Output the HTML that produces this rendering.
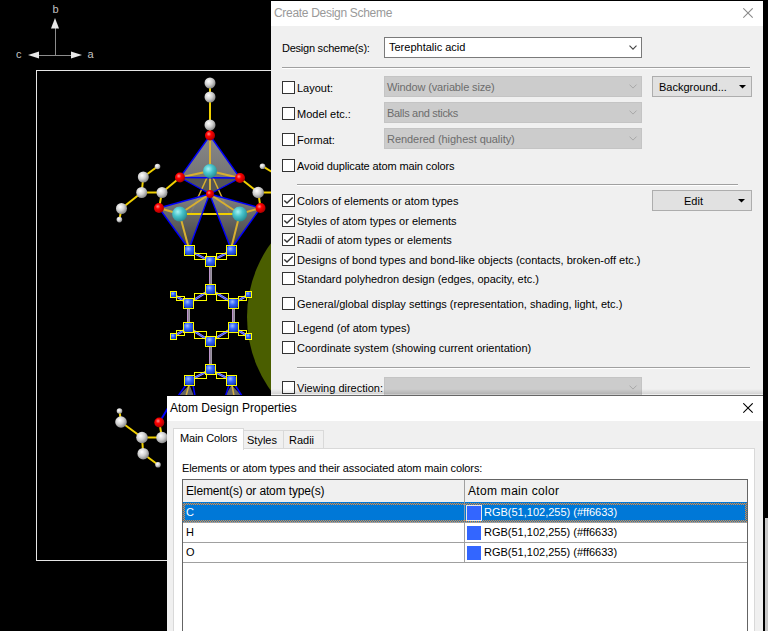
<!DOCTYPE html>
<html><head><meta charset="utf-8">
<style>
html,body{margin:0;padding:0;}
body{width:768px;height:631px;overflow:hidden;background:#000;position:relative;font-family:"Liberation Sans",sans-serif;}
.a{position:absolute;}
.t{position:absolute;font-size:11px;line-height:13px;white-space:pre;color:#000;}
.cb{position:absolute;width:11px;height:11px;border:1px solid #333;background:#fff;}
.cb.on::after{content:"";position:absolute;left:0;top:0;width:11px;height:11px;}
.sep{position:absolute;height:1px;background:#a0a0a0;border-bottom:1px solid #fff;}
.dcombo{position:absolute;width:256px;height:19px;border:1px solid #c4c4c4;background:#ccc;}
.btn{position:absolute;width:98px;height:19px;border:1px solid #adadad;background:#e1e1e1;}
</style></head><body>
<svg class="a" style="left:0;top:0" width="768" height="631" viewBox="0 0 768 631" id="mol">
<defs><radialGradient id="gw" cx="0.38" cy="0.35" r="0.7"><stop offset="0" stop-color="#ffffff"/><stop offset="0.5" stop-color="#d0d0d0"/><stop offset="1" stop-color="#808080"/></radialGradient><radialGradient id="gr" cx="0.38" cy="0.35" r="0.7"><stop offset="0" stop-color="#ff9090"/><stop offset="0.35" stop-color="#ff0000"/><stop offset="1" stop-color="#a00000"/></radialGradient><radialGradient id="gt" cx="0.38" cy="0.35" r="0.7"><stop offset="0" stop-color="#a8f4f4"/><stop offset="0.45" stop-color="#48c4cc"/><stop offset="1" stop-color="#248890"/></radialGradient><radialGradient id="gb" cx="0.4" cy="0.35" r="0.7"><stop offset="0" stop-color="#a0c0ff"/><stop offset="0.4" stop-color="#3366ff"/><stop offset="1" stop-color="#1030a0"/></radialGradient><linearGradient id="fg1" x1="0" y1="0" x2="0" y2="1"><stop offset="0" stop-color="#909090"/><stop offset="1" stop-color="#7a7a7a"/></linearGradient><linearGradient id="fg2" x1="0" y1="0" x2="0" y2="1"><stop offset="0" stop-color="#8a8a8a"/><stop offset="1" stop-color="#404040"/></linearGradient></defs>
<g stroke="#8c8c8c" stroke-width="1"><line x1="55.5" y1="55.5" x2="55.5" y2="26"/><line x1="36" y1="55.5" x2="74" y2="55.5"/></g>
<g fill="#e8e8e8"><polygon points="55,18 51,28.5 59,28.5"/><polygon points="28,55 39,51.5 39,58.5"/><polygon points="82,55 71,51.5 71,58.5"/></g>
<g font-family="Liberation Sans" font-size="11" fill="#d8d8d8" opacity="0.9"><text x="52.5" y="13">b</text><text x="16" y="58">c</text><text x="87.5" y="58">a</text></g>
<rect x="36.5" y="70.5" width="400" height="490" fill="none" stroke="#e6e6e6" stroke-width="1"/>
<circle cx="373" cy="317" r="126" fill="#4a5e00"/>
<line x1="210" y1="83" x2="210" y2="135" stroke="#f0d000" stroke-width="2"/>
<polygon points="210,135.5 180,177.5 240,178" fill="url(#fg1)" fill-opacity="0.95"/>
<polygon points="180,177.5 210,194 240,178" fill="#5a5a5a" fill-opacity="0.95"/>
<line x1="210" y1="171" x2="210" y2="135.5" stroke="#d8b030" stroke-width="2"/>
<line x1="210" y1="171" x2="180" y2="177.5" stroke="#d8b030" stroke-width="2"/>
<line x1="210" y1="171" x2="240" y2="178" stroke="#d8b030" stroke-width="2"/>
<line x1="210" y1="171" x2="210" y2="194" stroke="#d8b030" stroke-width="2"/>
<line x1="210" y1="171" x2="190" y2="215" stroke="#d8b030" stroke-width="1.5"/>
<line x1="210" y1="171" x2="230" y2="215" stroke="#d8b030" stroke-width="1.5"/>
<polygon points="159,208 209.5,194 189,249" fill="url(#fg2)" fill-opacity="0.95"/>
<polygon points="260.5,208 209.5,194 231,249" fill="url(#fg2)" fill-opacity="0.95"/>
<line x1="179.6" y1="214" x2="159" y2="208" stroke="#d8b030" stroke-width="2"/>
<line x1="179.6" y1="214" x2="209.5" y2="194" stroke="#d8b030" stroke-width="2"/>
<line x1="179.6" y1="214" x2="189" y2="249" stroke="#d8b030" stroke-width="2"/>
<line x1="239.7" y1="214" x2="260.5" y2="208" stroke="#d8b030" stroke-width="2"/>
<line x1="239.7" y1="214" x2="209.5" y2="194" stroke="#d8b030" stroke-width="2"/>
<line x1="239.7" y1="214" x2="231" y2="249" stroke="#d8b030" stroke-width="2"/>
<line x1="179.6" y1="214" x2="239.7" y2="214" stroke="#f0d000" stroke-width="2"/>
<line x1="210" y1="135.5" x2="180" y2="177.5" stroke="#0000ff" stroke-width="1.4"/>
<line x1="210" y1="135.5" x2="240" y2="178" stroke="#0000ff" stroke-width="1.4"/>
<line x1="180" y1="177.5" x2="240" y2="178" stroke="#0000ff" stroke-width="1.4"/>
<line x1="180" y1="177.5" x2="210" y2="194" stroke="#0000ff" stroke-width="1.4"/>
<line x1="240" y1="178" x2="210" y2="194" stroke="#0000ff" stroke-width="1.4"/>
<line x1="159" y1="208" x2="209.5" y2="194" stroke="#0000ff" stroke-width="1.4"/>
<line x1="159" y1="208" x2="189" y2="249" stroke="#0000ff" stroke-width="1.4"/>
<line x1="209.5" y1="194" x2="189" y2="249" stroke="#0000ff" stroke-width="1.4"/>
<line x1="260.5" y1="208" x2="209.5" y2="194" stroke="#0000ff" stroke-width="1.4"/>
<line x1="260.5" y1="208" x2="231" y2="249" stroke="#0000ff" stroke-width="1.4"/>
<line x1="209.5" y1="194" x2="231" y2="249" stroke="#0000ff" stroke-width="1.4"/>
<line x1="157.5" y1="166.5" x2="143.3" y2="177" stroke="#f0d000" stroke-width="2"/>
<line x1="143.3" y1="177" x2="141.7" y2="192.5" stroke="#f0d000" stroke-width="2"/>
<line x1="141.7" y1="192.5" x2="162" y2="192.5" stroke="#f0d000" stroke-width="2"/>
<line x1="141.7" y1="192.5" x2="121.5" y2="208.5" stroke="#f0d000" stroke-width="2"/>
<line x1="121.5" y1="208.5" x2="119.4" y2="219.6" stroke="#f0d000" stroke-width="2"/>
<line x1="162" y1="192.5" x2="180" y2="177.5" stroke="#f0d000" stroke-width="2"/>
<line x1="162" y1="192.5" x2="159" y2="208" stroke="#f0d000" stroke-width="2"/>
<line x1="262.5" y1="166.2" x2="272" y2="172" stroke="#f0d000" stroke-width="2"/>
<line x1="258.2" y1="192.5" x2="272" y2="192.5" stroke="#f0d000" stroke-width="2"/>
<line x1="239.5" y1="177.7" x2="258.2" y2="192.5" stroke="#f0d000" stroke-width="2"/>
<line x1="258.2" y1="192.5" x2="260.6" y2="207.8" stroke="#f0d000" stroke-width="2"/>
<circle cx="210" cy="83" r="5.5" fill="url(#gw)"/>
<circle cx="210" cy="97" r="5.5" fill="url(#gw)"/>
<circle cx="210" cy="125" r="5.5" fill="url(#gw)"/>
<circle cx="210" cy="135.5" r="5" fill="url(#gr)"/>
<circle cx="210" cy="171" r="7" fill="url(#gt)"/>
<circle cx="180" cy="177.5" r="5" fill="url(#gr)"/>
<circle cx="240" cy="178" r="5" fill="url(#gr)"/>
<circle cx="210" cy="194" r="4" fill="url(#gr)"/>
<circle cx="159" cy="208" r="5" fill="url(#gr)"/>
<circle cx="260.5" cy="208" r="5" fill="url(#gr)"/>
<circle cx="179.6" cy="214" r="7.5" fill="url(#gt)"/>
<circle cx="239.7" cy="214" r="7.5" fill="url(#gt)"/>
<circle cx="157.5" cy="166.5" r="2.8" fill="url(#gw)"/>
<circle cx="143.3" cy="177" r="5.5" fill="url(#gw)"/>
<circle cx="141.7" cy="192.5" r="5.5" fill="url(#gw)"/>
<circle cx="162" cy="192.5" r="5.5" fill="url(#gw)"/>
<circle cx="121.5" cy="208.5" r="5.5" fill="url(#gw)"/>
<circle cx="119.4" cy="219.6" r="2.8" fill="url(#gw)"/>
<circle cx="262.5" cy="166.2" r="2.8" fill="url(#gw)"/>
<circle cx="258.2" cy="192.5" r="5.8" fill="url(#gw)"/>
<polygon points="189.5,385 178,396 194,396" fill="#707070" fill-opacity="0.9"/>
<polygon points="231.5,385 225,396 242,396" fill="#707070" fill-opacity="0.9"/>
<line x1="186" y1="385" x2="178" y2="396" stroke="#0000ff" stroke-width="1.5"/>
<line x1="193" y1="385" x2="195" y2="396" stroke="#0000ff" stroke-width="1.5"/>
<line x1="229" y1="385" x2="225.5" y2="396" stroke="#0000ff" stroke-width="1.5"/>
<line x1="235" y1="385" x2="242" y2="396" stroke="#0000ff" stroke-width="1.5"/>
<line x1="189" y1="385" x2="186" y2="396" stroke="#d8b040" stroke-width="1.5"/>
<line x1="232" y1="385" x2="234" y2="396" stroke="#d8b040" stroke-width="1.5"/>
<line x1="189.5" y1="250.5" x2="210.5" y2="261.5" stroke="#d0a0ff" stroke-width="2.2"/>
<line x1="189.5" y1="250.5" x2="210.5" y2="261.5" stroke="#3060ff" stroke-width="1.2"/>
<rect x="194.5" y="253.5" width="12" height="6" fill="none" stroke="#ffff00" stroke-width="1"/>
<line x1="231.5" y1="250.5" x2="210.5" y2="261.5" stroke="#d0a0ff" stroke-width="2.2"/>
<line x1="231.5" y1="250.5" x2="210.5" y2="261.5" stroke="#3060ff" stroke-width="1.2"/>
<rect x="216.5" y="253.5" width="10" height="6" fill="none" stroke="#ffff00" stroke-width="1"/>
<line x1="209.7" y1="261.5" x2="209.7" y2="289.5" stroke="#e0b0f0" stroke-width="1.1"/>
<line x1="211.1" y1="261.5" x2="211.1" y2="289.5" stroke="#f4e8ff" stroke-width="1.1"/>
<line x1="210.5" y1="289.5" x2="188.5" y2="303.5" stroke="#d0a0ff" stroke-width="2.2"/>
<line x1="210.5" y1="289.5" x2="188.5" y2="303.5" stroke="#3060ff" stroke-width="1.2"/>
<rect x="194.5" y="293.5" width="12" height="7" fill="none" stroke="#ffff00" stroke-width="1"/>
<line x1="210.5" y1="289.5" x2="233.5" y2="303.5" stroke="#d0a0ff" stroke-width="2.2"/>
<line x1="210.5" y1="289.5" x2="233.5" y2="303.5" stroke="#3060ff" stroke-width="1.2"/>
<rect x="216.5" y="293.5" width="12" height="7" fill="none" stroke="#ffff00" stroke-width="1"/>
<line x1="187.7" y1="303.5" x2="187.7" y2="327.5" stroke="#e0b0f0" stroke-width="1.1"/>
<line x1="189.1" y1="303.5" x2="189.1" y2="327.5" stroke="#f4e8ff" stroke-width="1.1"/>
<line x1="232.7" y1="303.5" x2="232.7" y2="327.5" stroke="#e0b0f0" stroke-width="1.1"/>
<line x1="234.1" y1="303.5" x2="234.1" y2="327.5" stroke="#f4e8ff" stroke-width="1.1"/>
<line x1="188.5" y1="327.5" x2="210.5" y2="341.5" stroke="#d0a0ff" stroke-width="2.2"/>
<line x1="188.5" y1="327.5" x2="210.5" y2="341.5" stroke="#3060ff" stroke-width="1.2"/>
<rect x="194.5" y="331.5" width="12" height="7" fill="none" stroke="#ffff00" stroke-width="1"/>
<line x1="233.5" y1="327.5" x2="210.5" y2="341.5" stroke="#d0a0ff" stroke-width="2.2"/>
<line x1="233.5" y1="327.5" x2="210.5" y2="341.5" stroke="#3060ff" stroke-width="1.2"/>
<rect x="216.5" y="331.5" width="12" height="7" fill="none" stroke="#ffff00" stroke-width="1"/>
<line x1="188.5" y1="303.5" x2="173.5" y2="294.5" stroke="#d0a0ff" stroke-width="2.2"/>
<line x1="188.5" y1="303.5" x2="173.5" y2="294.5" stroke="#3060ff" stroke-width="1.2"/>
<rect x="176.5" y="296.5" width="8" height="4" fill="none" stroke="#ffff00" stroke-width="1"/>
<line x1="233.5" y1="303.5" x2="248.5" y2="294.5" stroke="#d0a0ff" stroke-width="2.2"/>
<line x1="233.5" y1="303.5" x2="248.5" y2="294.5" stroke="#3060ff" stroke-width="1.2"/>
<rect x="238.5" y="296.5" width="8" height="4" fill="none" stroke="#ffff00" stroke-width="1"/>
<line x1="188.5" y1="327.5" x2="173.5" y2="336.5" stroke="#d0a0ff" stroke-width="2.2"/>
<line x1="188.5" y1="327.5" x2="173.5" y2="336.5" stroke="#3060ff" stroke-width="1.2"/>
<rect x="176.5" y="330.5" width="8" height="5" fill="none" stroke="#ffff00" stroke-width="1"/>
<line x1="233.5" y1="327.5" x2="248.5" y2="336.5" stroke="#d0a0ff" stroke-width="2.2"/>
<line x1="233.5" y1="327.5" x2="248.5" y2="336.5" stroke="#3060ff" stroke-width="1.2"/>
<rect x="238.5" y="330.5" width="8" height="5" fill="none" stroke="#ffff00" stroke-width="1"/>
<line x1="209.7" y1="341.5" x2="209.7" y2="369.5" stroke="#e0b0f0" stroke-width="1.1"/>
<line x1="211.1" y1="341.5" x2="211.1" y2="369.5" stroke="#f4e8ff" stroke-width="1.1"/>
<line x1="210.5" y1="369.5" x2="189.5" y2="380.5" stroke="#d0a0ff" stroke-width="2.2"/>
<line x1="210.5" y1="369.5" x2="189.5" y2="380.5" stroke="#3060ff" stroke-width="1.2"/>
<rect x="194.5" y="372.5" width="12" height="6" fill="none" stroke="#ffff00" stroke-width="1"/>
<line x1="210.5" y1="369.5" x2="231.5" y2="380.5" stroke="#d0a0ff" stroke-width="2.2"/>
<line x1="210.5" y1="369.5" x2="231.5" y2="380.5" stroke="#3060ff" stroke-width="1.2"/>
<rect x="216.5" y="372.5" width="10" height="6" fill="none" stroke="#ffff00" stroke-width="1"/>
<clipPath id="cl"><rect x="0" y="0" width="9" height="9"/></clipPath>
<g transform="translate(185,246)"><g clip-path="url(#cl)"><circle cx="4.5" cy="4.5" r="5.6" fill="url(#gb)"/></g></g>
<rect x="184.5" y="245.5" width="10" height="10" fill="none" stroke="#ffff00" stroke-width="1"/>
<g transform="translate(227,246)"><g clip-path="url(#cl)"><circle cx="4.5" cy="4.5" r="5.6" fill="url(#gb)"/></g></g>
<rect x="226.5" y="245.5" width="10" height="10" fill="none" stroke="#ffff00" stroke-width="1"/>
<g transform="translate(206,257)"><g clip-path="url(#cl)"><circle cx="4.5" cy="4.5" r="5.6" fill="url(#gb)"/></g></g>
<rect x="205.5" y="256.5" width="10" height="10" fill="none" stroke="#ffff00" stroke-width="1"/>
<g transform="translate(206,285)"><g clip-path="url(#cl)"><circle cx="4.5" cy="4.5" r="5.6" fill="url(#gb)"/></g></g>
<rect x="205.5" y="284.5" width="10" height="10" fill="none" stroke="#ffff00" stroke-width="1"/>
<g transform="translate(184,299)"><g clip-path="url(#cl)"><circle cx="4.5" cy="4.5" r="5.6" fill="url(#gb)"/></g></g>
<rect x="183.5" y="298.5" width="10" height="10" fill="none" stroke="#ffff00" stroke-width="1"/>
<g transform="translate(229,299)"><g clip-path="url(#cl)"><circle cx="4.5" cy="4.5" r="5.6" fill="url(#gb)"/></g></g>
<rect x="228.5" y="298.5" width="10" height="10" fill="none" stroke="#ffff00" stroke-width="1"/>
<g transform="translate(184,323)"><g clip-path="url(#cl)"><circle cx="4.5" cy="4.5" r="5.6" fill="url(#gb)"/></g></g>
<rect x="183.5" y="322.5" width="10" height="10" fill="none" stroke="#ffff00" stroke-width="1"/>
<g transform="translate(229,323)"><g clip-path="url(#cl)"><circle cx="4.5" cy="4.5" r="5.6" fill="url(#gb)"/></g></g>
<rect x="228.5" y="322.5" width="10" height="10" fill="none" stroke="#ffff00" stroke-width="1"/>
<g transform="translate(206,337)"><g clip-path="url(#cl)"><circle cx="4.5" cy="4.5" r="5.6" fill="url(#gb)"/></g></g>
<rect x="205.5" y="336.5" width="10" height="10" fill="none" stroke="#ffff00" stroke-width="1"/>
<g transform="translate(206,365)"><g clip-path="url(#cl)"><circle cx="4.5" cy="4.5" r="5.6" fill="url(#gb)"/></g></g>
<rect x="205.5" y="364.5" width="10" height="10" fill="none" stroke="#ffff00" stroke-width="1"/>
<g transform="translate(185,376)"><g clip-path="url(#cl)"><circle cx="4.5" cy="4.5" r="5.6" fill="url(#gb)"/></g></g>
<rect x="184.5" y="375.5" width="10" height="10" fill="none" stroke="#ffff00" stroke-width="1"/>
<g transform="translate(227,376)"><g clip-path="url(#cl)"><circle cx="4.5" cy="4.5" r="5.6" fill="url(#gb)"/></g></g>
<rect x="226.5" y="375.5" width="10" height="10" fill="none" stroke="#ffff00" stroke-width="1"/>
<clipPath id="cs"><rect x="0" y="0" width="5" height="5"/></clipPath>
<g transform="translate(171,292)"><g clip-path="url(#cs)"><circle cx="2.5" cy="2.5" r="3.2" fill="url(#gb)"/></g></g>
<rect x="170.5" y="291.5" width="6" height="6" fill="none" stroke="#ffff00" stroke-width="1"/>
<g transform="translate(246,292)"><g clip-path="url(#cs)"><circle cx="2.5" cy="2.5" r="3.2" fill="url(#gb)"/></g></g>
<rect x="245.5" y="291.5" width="6" height="6" fill="none" stroke="#ffff00" stroke-width="1"/>
<g transform="translate(171,334)"><g clip-path="url(#cs)"><circle cx="2.5" cy="2.5" r="3.2" fill="url(#gb)"/></g></g>
<rect x="170.5" y="333.5" width="6" height="6" fill="none" stroke="#ffff00" stroke-width="1"/>
<g transform="translate(246,334)"><g clip-path="url(#cs)"><circle cx="2.5" cy="2.5" r="3.2" fill="url(#gb)"/></g></g>
<rect x="245.5" y="333.5" width="6" height="6" fill="none" stroke="#ffff00" stroke-width="1"/>
<line x1="119.5" y1="411" x2="121" y2="422" stroke="#f0d000" stroke-width="2"/>
<line x1="121" y1="422" x2="142" y2="437.5" stroke="#f0d000" stroke-width="2"/>
<line x1="142" y1="437.5" x2="162" y2="437.5" stroke="#f0d000" stroke-width="2"/>
<line x1="142" y1="437.5" x2="143.2" y2="453.7" stroke="#f0d000" stroke-width="2"/>
<line x1="143.2" y1="453.7" x2="158" y2="464.7" stroke="#f0d000" stroke-width="2"/>
<line x1="159.3" y1="422.5" x2="162" y2="437.5" stroke="#f0d000" stroke-width="2"/>
<line x1="159.3" y1="422.5" x2="168" y2="408" stroke="#0000ff" stroke-width="2"/>
<circle cx="119.5" cy="411" r="2.8" fill="url(#gw)"/>
<circle cx="121" cy="422" r="5.8" fill="url(#gw)"/>
<circle cx="142" cy="437.5" r="5.8" fill="url(#gw)"/>
<circle cx="143.2" cy="453.7" r="5.8" fill="url(#gw)"/>
<circle cx="162" cy="437.5" r="5.8" fill="url(#gw)"/>
<circle cx="159.3" cy="422.5" r="5" fill="url(#gr)"/>
<circle cx="158" cy="464.7" r="2.8" fill="url(#gw)"/>
<rect x="765" y="518" width="3" height="113" fill="#c8c8c8"/>

</svg>
<div id="w1" class="a" style="left:271px;top:1px;width:492px;height:394px;background:#f0f0f0;overflow:hidden">
<div class="a" style="left:0;top:0;width:492px;height:25px;background:#fff"></div>
<div class="t" style="left:3px;top:6px;font-size:12px;letter-spacing:-0.3px;color:#999">Create Design Scheme</div>
<svg class="a" style="left:472px;top:7px" width="11" height="11"><path d="M0.3,0.3 L9.7,9.7 M9.7,0.3 L0.3,9.7" stroke="#8a8a8a" stroke-width="1.1"/></svg>
<div class="t" style="left:11px;top:41px;letter-spacing:-0.24px;">Design scheme(s):</div>
<div class="a" style="left:113px;top:36px;width:256px;height:19px;border:1px solid #7a7a7a;background:#fff"></div>
<div class="t" style="left:118px;top:40px;">Terephtalic acid</div>
<svg class="a" style="left:358px;top:44px" width="9" height="6"><polyline points="0.5,0.6 4,4.1 7.5,0.6" fill="none" stroke="#444" stroke-width="1.1"/></svg>
<div class="sep" style="left:11px;top:66px;width:468px"></div>
<div class="cb" style="left:11px;top:80px;"></div>
<div class="t" style="left:26px;top:81px;">Layout:</div>
<div class="dcombo" style="left:113px;top:75px;"></div>
<div class="t" style="left:116px;top:80px;color:#6d6d6d;letter-spacing:-0.14px">Window (variable size)</div>
<svg class="a" style="left:358px;top:83px" width="9" height="6"><polyline points="0.5,0.6 4,4.1 7.5,0.6" fill="none" stroke="#a8a8a8" stroke-width="1"/></svg>
<div class="cb" style="left:11px;top:106px;"></div>
<div class="t" style="left:26px;top:107px;">Model etc.:</div>
<div class="dcombo" style="left:113px;top:101px;"></div>
<div class="t" style="left:116px;top:106px;color:#6d6d6d;letter-spacing:-0.3px">Balls and sticks</div>
<svg class="a" style="left:358px;top:109px" width="9" height="6"><polyline points="0.5,0.6 4,4.1 7.5,0.6" fill="none" stroke="#a8a8a8" stroke-width="1"/></svg>
<div class="cb" style="left:11px;top:132px;"></div>
<div class="t" style="left:26px;top:133px;">Format:</div>
<div class="dcombo" style="left:113px;top:127px;"></div>
<div class="t" style="left:116px;top:132px;color:#6d6d6d;letter-spacing:-0.05px">Rendered (highest quality)</div>
<svg class="a" style="left:358px;top:135px" width="9" height="6"><polyline points="0.5,0.6 4,4.1 7.5,0.6" fill="none" stroke="#a8a8a8" stroke-width="1"/></svg>
<div class="btn" style="left:381px;top:75px;"></div>
<div class="t" style="left:388px;top:80px;">Background...</div>
<svg class="a" style="left:468px;top:84px" width="7" height="4"><polygon points="0,0 7,0 3.5,3.5" fill="#000"/></svg>
<div class="cb" style="left:11px;top:158px;"></div>
<div class="t" style="left:26px;top:159px;letter-spacing:-0.12px;">Avoid duplicate atom main colors</div>
<div class="sep" style="left:26px;top:183px;width:441px"></div>
<div class="btn" style="left:381px;top:189px;"></div>
<div class="t" style="left:413px;top:194px;">Edit</div>
<svg class="a" style="left:467px;top:198px" width="7" height="4"><polygon points="0,0 7,0 3.5,3.5" fill="#000"/></svg>
<div class="cb" style="left:11px;top:193px;"><svg width="13" height="13" style="position:absolute;left:-1px;top:-1px"><polyline points="2.3,6.4 5,9.1 10.7,3.4" fill="none" stroke="#333" stroke-width="1.4"/></svg></div>
<div class="t" style="left:26px;top:194px;">Colors of elements or atom types</div>
<div class="cb" style="left:11px;top:213px;"><svg width="13" height="13" style="position:absolute;left:-1px;top:-1px"><polyline points="2.3,6.4 5,9.1 10.7,3.4" fill="none" stroke="#333" stroke-width="1.4"/></svg></div>
<div class="t" style="left:26px;top:214px;">Styles of atom types or elements</div>
<div class="cb" style="left:11px;top:232px;"><svg width="13" height="13" style="position:absolute;left:-1px;top:-1px"><polyline points="2.3,6.4 5,9.1 10.7,3.4" fill="none" stroke="#333" stroke-width="1.4"/></svg></div>
<div class="t" style="left:26px;top:233px;">Radii of atom types or elements</div>
<div class="cb" style="left:11px;top:252px;"><svg width="13" height="13" style="position:absolute;left:-1px;top:-1px"><polyline points="2.3,6.4 5,9.1 10.7,3.4" fill="none" stroke="#333" stroke-width="1.4"/></svg></div>
<div class="t" style="left:26px;top:253px;">Designs of bond types and bond-like objects (contacts, broken-off etc.)</div>
<div class="cb" style="left:11px;top:271px;"></div>
<div class="t" style="left:26px;top:272px;">Standard polyhedron design (edges, opacity, etc.)</div>
<div class="cb" style="left:11px;top:296px;"></div>
<div class="t" style="left:26px;top:297px;">General/global display settings (representation, shading, light, etc.)</div>
<div class="cb" style="left:11px;top:320px;"></div>
<div class="t" style="left:26px;top:321px;">Legend (of atom types)</div>
<div class="cb" style="left:11px;top:340px;"></div>
<div class="t" style="left:26px;top:341px;">Coordinate system (showing current orientation)</div>
<div class="sep" style="left:26px;top:366px;width:453px"></div>
<div class="cb" style="left:11px;top:380px;"></div>
<div class="t" style="left:26px;top:381px;">Viewing direction:</div>
<div class="dcombo" style="left:113px;top:376px;"></div>
<svg class="a" style="left:358px;top:384px" width="9" height="6"><polyline points="0.5,0.6 4,4.1 7.5,0.6" fill="none" stroke="#a8a8a8" stroke-width="1"/></svg>
<div class="a" style="left:0;top:388px;width:492px;height:5px;background:linear-gradient(rgba(0,0,0,0),rgba(0,0,0,0.12))"></div>
</div>
<div id="w2" class="a" style="left:167px;top:395px;width:596px;height:236px;background:#f0f0f0;overflow:hidden">
<div class="a" style="left:0;top:0;width:104px;height:1px;background:#000"></div><div class="a" style="left:104px;top:0;width:492px;height:1px;background:#666"></div>
<div class="a" style="left:0;top:1px;width:596px;height:25px;background:#fff"></div>
<div class="t" style="left:3px;top:7px;font-size:12px;color:#000">Atom Design Properties</div>
<svg class="a" style="left:576px;top:8px" width="11" height="11"><path d="M0.3,0.3 L9.7,9.7 M9.7,0.3 L0.3,9.7" stroke="#000" stroke-width="1.1"/></svg>
<div class="a" style="left:6px;top:53px;width:580px;height:200px;border:1px solid #d9d9d9;background:#fff"></div>
<div class="a" style="left:76px;top:35px;width:39px;height:17px;border:1px solid #d9d9d9;border-bottom:none;background:#f0f0f0"></div>
<div class="a" style="left:117px;top:35px;width:39px;height:17px;border:1px solid #d9d9d9;border-left:none;border-bottom:none;background:#f0f0f0"></div>
<div class="a" style="left:6px;top:33px;width:69px;height:21px;border:1px solid #d9d9d9;border-bottom:none;background:#fff"></div>
<div class="t" style="left:13px;top:37px;letter-spacing:-0.14px;">Main Colors</div>
<div class="t" style="left:80px;top:39px;">Styles</div>
<div class="t" style="left:122px;top:39px;">Radii</div>
<div class="t" style="left:15px;top:67px;letter-spacing:-0.11px;">Elements or atom types and their associated atom main colors:</div>
<div class="a" style="left:15px;top:84px;width:564px;height:200px;border:1px solid #646464;background:#fff"></div>
<div class="a" style="left:16px;top:85px;width:564px;height:22px;background:#f0f0f0"></div>
<div class="a" style="left:297px;top:85px;width:1px;height:82px;background:#a0a0a0"></div>
<div class="t" style="left:19px;top:90px;font-size:12px;letter-spacing:-0.14px">Element(s) or atom type(s)</div>
<div class="t" style="left:301px;top:90px;font-size:12px;letter-spacing:0.3px">Atom main color</div>
<div class="a" style="left:16px;top:107px;width:564px;height:20px;background:#0078d7"></div>
<div class="a" style="left:297px;top:107px;width:1px;height:20px;background:#8a9ab0"></div><svg class="a" style="left:16px;top:107px" width="564" height="20"><defs><pattern id="ck" width="2" height="2" patternUnits="userSpaceOnUse"><rect x="0" y="0" width="1" height="1" fill="#f08a30"/><rect x="1" y="1" width="1" height="1" fill="#f08a30"/></pattern></defs><path d="M0,1 H564 V20 H0 Z M2,3 V18 H562 V3 Z" fill="url(#ck)" fill-rule="evenodd"/></svg>
<div class="a" style="left:16px;top:127px;width:564px;height:1px;background:#a0a0a0"></div>
<div class="a" style="left:16px;top:147px;width:564px;height:1px;background:#a0a0a0"></div>
<div class="a" style="left:16px;top:167px;width:564px;height:1px;background:#a0a0a0"></div>
<div class="t" style="left:19px;top:111px;color:#fff">C</div>
<div class="a" style="left:300px;top:111px;width:14px;height:14px;background:#3366ff;outline:1px solid #e8e8e8"></div>
<div class="t" style="left:317px;top:111px;color:#fff">RGB(51,102,255) (#ff6633)</div>
<div class="t" style="left:19px;top:131px;color:#000">H</div>
<div class="a" style="left:300px;top:131px;width:14px;height:14px;background:#3366ff;"></div>
<div class="t" style="left:317px;top:131px;color:#000">RGB(51,102,255) (#ff6633)</div>
<div class="t" style="left:19px;top:151px;color:#000">O</div>
<div class="a" style="left:300px;top:151px;width:14px;height:14px;background:#3366ff;"></div>
<div class="t" style="left:317px;top:151px;color:#000">RGB(51,102,255) (#ff6633)</div>
</div>
</body></html>
